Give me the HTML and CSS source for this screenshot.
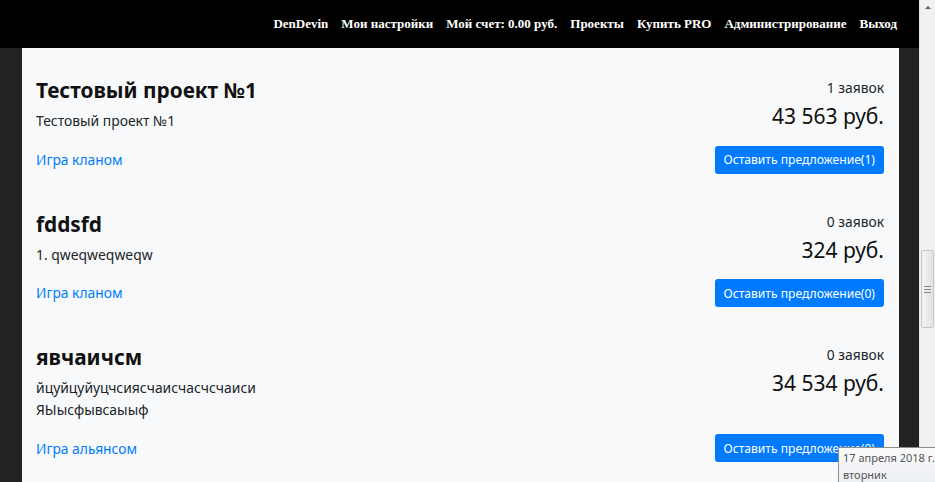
FILE: index.html
```html
<!DOCTYPE html>
<html lang="ru">

<head>
  <meta charset="UTF-8">
  <meta name="viewport" content="width=device-width, initial-scale=1.0">
  <title>Проекты</title>
  <link rel="stylesheet" href="styles.css">
</head>

<body>
  <div class="window">
    <div class="page">
      <!-- Верхнее меню -->
      <nav class="topnav">
        <a href="#">DenDevin</a>
        <a href="#">Мои настройки</a>
        <a href="#">Мой счет: 0.00 руб.</a>
        <a href="#">Проекты</a>
        <a href="#">Купить PRO</a>
        <a href="#">Администрирование</a>
        <a href="#">Выход</a>
      </nav>

      <div class="wrap">
        <div class="container">

          <div class="project">
            <div class="row">
              <div class="info">
                <h4>Тестовый проект №1</h4>
                <p>Тестовый проект №1</p>
              </div>
              <div class="stats">
                <div class="count">1 заявок</div>
                <div class="price">43 563 руб.</div>
              </div>
            </div>
            <div class="row bottom">
              <a href="#" class="type">Игра кланом</a>
              <button type="button">Оставить предложение(1)</button>
            </div>
          </div>

          <div class="project">
            <div class="row">
              <div class="info">
                <h4>fddsfd</h4>
                <p>1. qweqweqweqw</p>
              </div>
              <div class="stats">
                <div class="count">0 заявок</div>
                <div class="price">324 руб.</div>
              </div>
            </div>
            <div class="row bottom">
              <a href="#" class="type">Игра кланом</a>
              <button type="button">Оставить предложение(0)</button>
            </div>
          </div>

          <div class="project">
            <div class="row">
              <div class="info">
                <h4>явчаичсм</h4>
                <p>йцуйцуйуцчсиясчаисчасчсчаиси<br>ЯЫысфывсаыыф</p>
              </div>
              <div class="stats">
                <div class="count">0 заявок</div>
                <div class="price">34 534 руб.</div>
              </div>
            </div>
            <div class="row bottom">
              <a href="#" class="type">Игра альянсом</a>
              <button type="button">Оставить предложение(0)</button>
            </div>
          </div>

        </div>
      </div>
    </div>

    <!-- полоса прокрутки -->
    <div class="scrollbar">
      <div class="arrow"></div>
      <div class="thumb"><span></span><span></span><span></span></div>
    </div>
  </div>

  <div class="tooltip">17 апреля 2018 г.<br>вторник</div>
</body>

</html>
```

FILE: styles.css
```css
html,
body {
  margin: 0;
  padding: 0;
  height: 100%;
  overflow: hidden;
}

body {
  font-family: "Noto Sans", Arial, sans-serif;
  background-color: #222;
  color: #212529;
  position: relative;
}

.window {
  display: flex;
  height: 100%;
}

.page {
  flex: 1;
  display: flex;
  flex-direction: column;
  min-width: 0;
}

.topnav {
  flex-shrink: 0;
  background: #000;
  height: 48px;
  display: flex;
  justify-content: flex-end;
  align-items: center;
  gap: 13px;
  padding-right: 22px;
  font-family: "Liberation Serif", "Times New Roman", serif;
  font-weight: bold;
  font-size: 13px;
}

.topnav a {
  color: #fff;
  text-decoration: none;
}

.wrap {
  flex: 1;
  min-height: 0;
  overflow: hidden;
  padding: 0 20px 0 22px;
}

.container {
  background: #f8f9fa;
  min-height: 100%;
  padding: 29px 15px 0 14px;
  box-sizing: border-box;
}

.project {
  margin-bottom: 37px;
}

.row {
  display: flex;
  justify-content: space-between;
}

.bottom {
  align-items: center;
  margin-top: 14px;
}

h4 {
  font-size: 20.8px;
  font-weight: bold;
  line-height: 26px;
  margin: 0 0 7px;
  color: #111;
}

.info p {
  margin: 0;
  font-size: 13.9px;
  line-height: 21.6px;
}

.stats {
  text-align: right;
}

.count {
  font-size: 13.8px;
  line-height: 22px;
}

.price {
  margin-top: 4px;
  font-size: 21px;
  line-height: 26px;
  color: #111;
}

.type {
  color: #007bff;
  text-decoration: none;
  font-size: 13.8px;
  line-height: 21.6px;
}

button {
  background-color: #007bff;
  color: #fff;
  border: none;
  border-radius: 3px;
  height: 28px;
  padding: 0 9px;
  font-family: inherit;
  font-size: 12.1px;
  cursor: pointer;
}

.scrollbar {
  flex-shrink: 0;
  width: 15px;
  background: #f0f0f0;
  border-left: 1px solid #e6e6e6;
}

.arrow {
  width: 0;
  height: 0;
  margin: 6px auto 0;
  border-left: 3px solid transparent;
  border-right: 3px solid transparent;
  border-bottom: 3px solid #606060;
}

.thumb {
  margin: 241px 1px 0;
  height: 76px;
  background: linear-gradient(to right, #f3f3f3, #e2e2e2);
  border: 1px solid #c8c8c8;
  border-radius: 2px;
  display: flex;
  flex-direction: column;
  justify-content: center;
  align-items: center;
  gap: 2px;
}

.thumb span {
  width: 7px;
  height: 1px;
  background: #8a8a8a;
}

.tooltip {
  position: absolute;
  left: 838px;
  top: 447px;
  width: 110px;
  height: 40px;
  padding: 1px 4px;
  background: linear-gradient(to bottom, #fafafa, #e9ecf2);
  border: 1px solid #8d8d8d;
  color: #575757;
  font-size: 11px;
  line-height: 17px;
}
```
